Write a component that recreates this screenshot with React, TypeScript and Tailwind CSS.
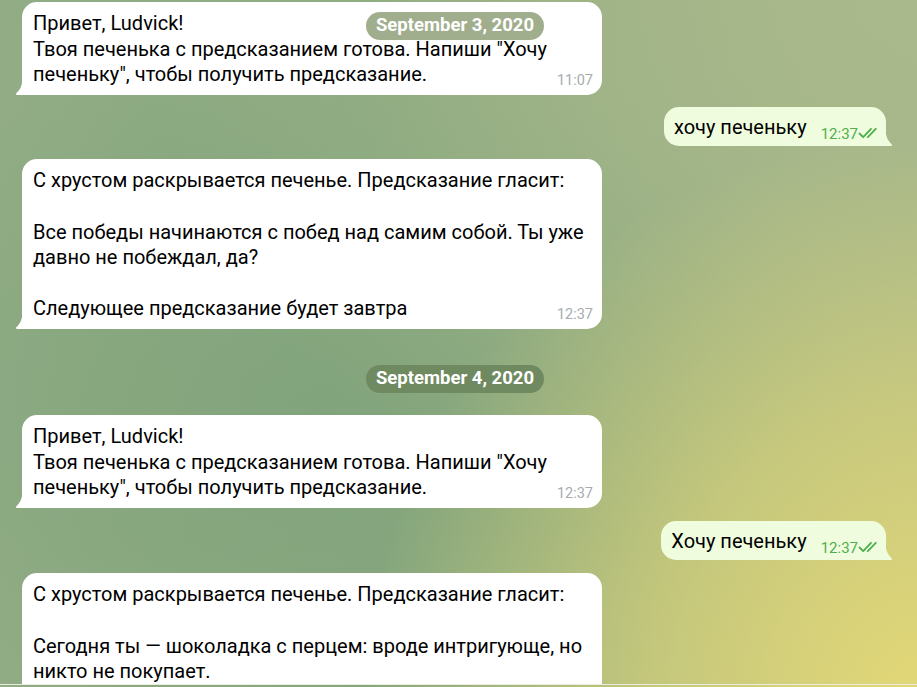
import { ReactNode } from 'react';

const Tail = ({ side }: { side: 'left' | 'right' }) => (
  <svg
    width="9"
    height="17"
    viewBox="0 0 9 17"
    className={
      side === 'left'
        ? 'absolute bottom-0 left-[-8px] fill-white'
        : 'absolute bottom-0 right-[-8px] fill-[#effdde] -scale-x-100'
    }
  >
    <path d="M3 17h6V0c-.193 2.84-.876 5.767-2.05 8.782-.904 2.325-2.446 4.485-4.625 6.48A1 1 0 003 17z" />
  </svg>
);

const Checks = () => (
  <svg width="21" height="12" viewBox="0 0 21 12" fill="none" className="stroke-[#4fae4e]">
    <path d="M1.5 6.5 L5.2 10.2 L13 1.8" strokeWidth="1.8" strokeLinecap="round" strokeLinejoin="round" />
    <path d="M9.8 10.2 L17.8 1.8" strokeWidth="1.8" strokeLinecap="round" strokeLinejoin="round" />
  </svg>
);

const Incoming = ({
  lines,
  time,
  extra = '',
  children,
}: {
  lines: string[];
  time?: string;
  extra?: string;
  children?: ReactNode;
}) => (
  <div className={`relative ml-[22px] w-[580px] shrink-0 rounded-[15px] rounded-bl-none bg-white pl-[11px] pr-[9px] pt-[9px] pb-[7px] ${extra}`}>
    <Tail side="left" />
    {children}
    <div className="text-[20px] leading-[25.6px] text-black">
      {lines.map((l, i) => (
        <div key={i} className="h-[25.6px] whitespace-nowrap">
          {l}
        </div>
      ))}
    </div>
    {time && (
      <span className="absolute bottom-[5px] right-[9px] text-[14.5px] leading-[18px] text-[#a6acaf]">{time}</span>
    )}
  </div>
);

const Outgoing = ({ text }: { text: string }) => (
  <div className="flex justify-end pr-[31px]">
    <div className="relative flex items-end rounded-[15px] rounded-br-none bg-[#effdde] pl-[10px] pr-[7px] pt-[8px] pb-[6px]">
      <Tail side="right" />
      <span className="whitespace-nowrap text-[20px] leading-[25.6px] text-black">{text}</span>
      <span className="mb-[-3px] ml-[14px] text-[15px] leading-[18px] text-[#4fae4e]">12:37</span>
      <span className="mb-[1px]">
        <Checks />
      </span>
    </div>
  </div>
);

const DatePill = ({ label, className }: { label: string; className: string }) => (
  <div className={`flex h-[28px] w-[178px] items-center justify-center rounded-full text-[18.5px] font-bold text-white ${className}`}>
    {label}
  </div>
);

export default function App() {
  const hello = [
    'Привет, Ludvick!',
    'Твоя печенька с предсказанием готова. Напиши "Хочу',
    'печеньку", чтобы получить предсказание.',
  ];

  return (
    <div
      className="h-[687px] w-[917px] overflow-hidden bg-[#8aa880] bg-[radial-gradient(circle_at_100%_100%,#e2d777_0%,rgba(226,215,119,0.6)_24%,rgba(226,215,119,0)_48%),radial-gradient(ellipse_at_100%_0%,#aab98b_0%,rgba(170,185,139,0)_60%),radial-gradient(ellipse_at_35%_60%,#82a47c_0%,rgba(130,164,124,0)_65%),linear-gradient(90deg,#92ad86_0%,#88a87f_40%,#a1b489_100%)]"
      style={{ fontFamily: 'Roboto, "Noto Sans", sans-serif' }}
    >
      <div className="flex h-[684px] flex-col overflow-hidden pt-[2px]">
        <Incoming lines={hello} time="11:07">
          <div className="absolute left-[344px] top-[10px]">
            <DatePill label="September 3, 2020" className="bg-[#a1ae8e]" />
          </div>
        </Incoming>

        <div className="mt-[12px]">
          <Outgoing text="хочу печеньку" />
        </div>

        <div className="mt-[13px]">
          <Incoming
            lines={[
              'С хрустом раскрывается печенье. Предсказание гласит:',
              '',
              'Все победы начинаются с побед над самим собой. Ты уже',
              'давно не побеждал, да?',
              '',
              'Следующее предсказание будет завтра',
            ]}
            time="12:37"
          />
        </div>

        <div className="mt-[36px] flex w-[910px] justify-center">
          <DatePill label="September 4, 2020" className="bg-[#6f8a60]" />
        </div>

        <div className="mt-[22px]">
          <Incoming lines={hello} time="12:37" />
        </div>

        <div className="mt-[13px]">
          <Outgoing text="Хочу печеньку" />
        </div>

        <div className="mt-[13px]">
          <Incoming
            lines={[
              'С хрустом раскрывается печенье. Предсказание гласит:',
              '',
              'Сегодня ты — шоколадка с перцем: вроде интригующе, но',
              'никто не покупает.',
            ]}
            extra="pb-[60px]"
          />
        </div>
      </div>
      <div className="h-[1px] bg-[#e9ecdf]" />
    </div>
  );
}
